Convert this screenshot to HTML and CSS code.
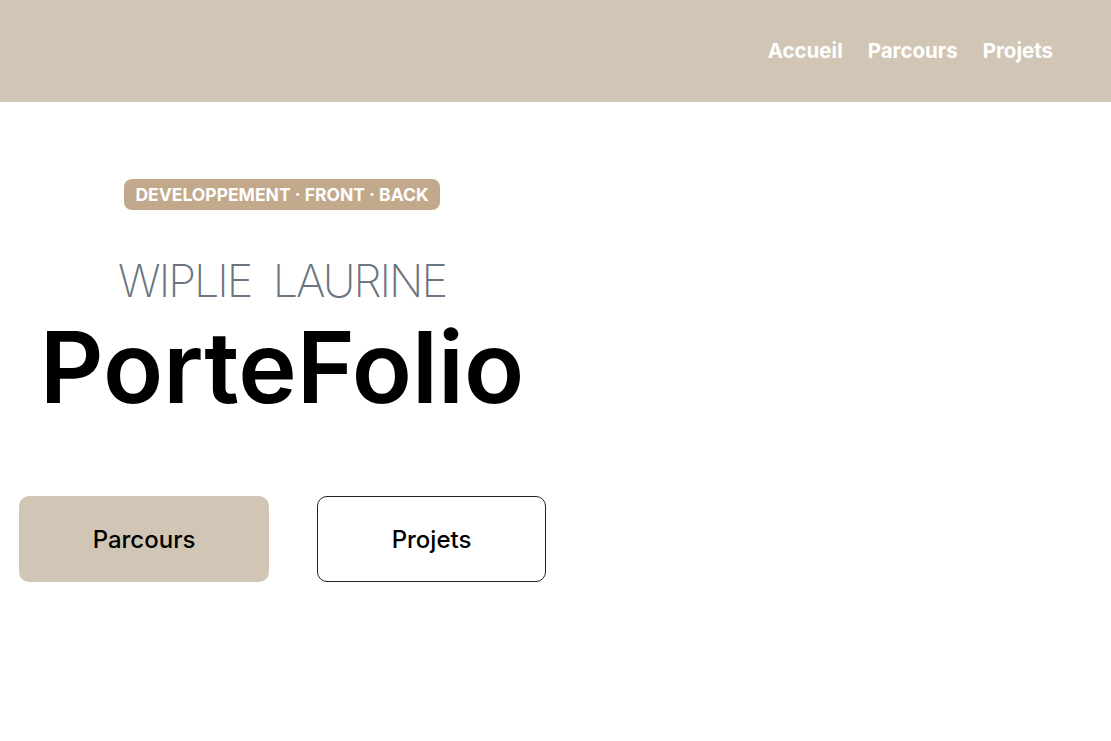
FILE: index.html
```html
<!DOCTYPE html>
<html lang="fr">
<head>
<meta charset="utf-8">
<title>PorteFolio</title>
<link rel="stylesheet" href="styles.css">
</head>
<body>
<header class="top">
  <nav class="nav">
    <a href="#" class="nav-link">Accueil</a>
    <a href="#" class="nav-link">Parcours</a>
    <a href="#" class="nav-link">Projets</a>
  </nav>
</header>
<main class="hero">
  <div class="intro">
    <span class="badge">DEVELOPPEMENT · FRONT · BACK</span>
    <p class="name">WIPLIE&nbsp; LAURINE</p>
    <h1 class="title">PorteFolio</h1>
  </div>
  <div class="actions">
    <a href="#" class="btn btn-fill">Parcours</a>
    <a href="#" class="btn btn-outline">Projets</a>
  </div>
</main>
</body>
</html>
```

FILE: styles.css
```css
* { box-sizing: border-box; }
body {
  margin: 0;
  font-family: Inter, "Open Sans", sans-serif;
  background: #fff;
  color: #000;
}
.top {
  height: 102px;
  background: #d1c6b5;
  display: flex;
  justify-content: flex-end;
  align-items: center;
  padding-right: 58px;
  padding-bottom: 2px;
}
.nav {
  display: flex;
  gap: 25px;
}
.nav-link {
  color: #fff;
  text-decoration: none;
  font-weight: 700;
  font-size: 20.5px;
}
.hero {
  padding-top: 77px;
}
.intro {
  width: 564px;
  display: flex;
  flex-direction: column;
  align-items: center;
}
.badge {
  background: #c2a98c;
  color: #fff;
  font-weight: 700;
  font-size: 17.5px;
  border-radius: 8px;
  padding: 4px 11px;
  line-height: 23px;
}
.name {
  margin: 45px 0 0;
  font-size: 45px;
  font-weight: 200;
  color: #6b7480;
  line-height: 52px;
  letter-spacing: -2px;
}
.title {
  margin: 5px 0 0;
  font-size: 99px;
  font-weight: 600;
  line-height: 110px;
  letter-spacing: 0;
}
.actions {
  display: flex;
  gap: 48px;
  padding-left: 19px;
  margin-top: 74px;
}
.btn {
  height: 86px;
  border-radius: 10px;
  display: flex;
  align-items: center;
  justify-content: center;
  color: #000;
  text-decoration: none;
  font-size: 24px;
  font-weight: 500;
}
.btn-fill {
  width: 250px;
  background: #d1c6b5;
}
.btn-outline {
  width: 229px;
  border: 1px solid #222;
}
```
